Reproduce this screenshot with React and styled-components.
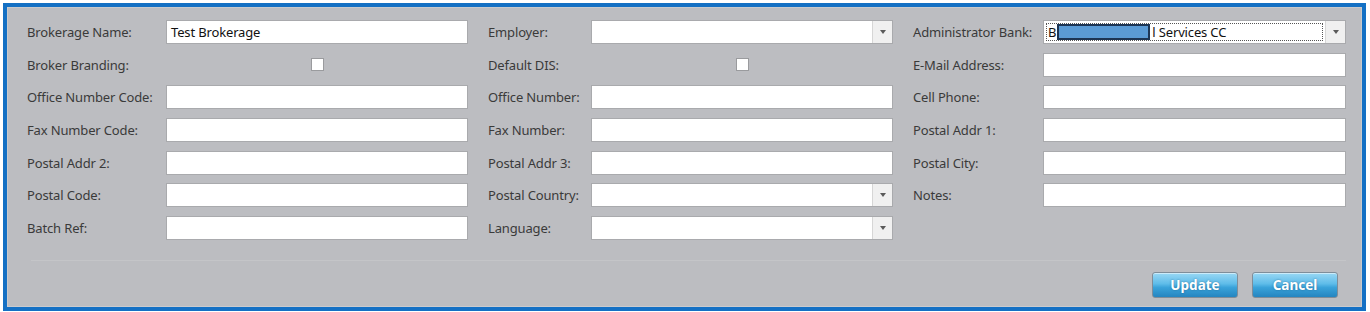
import React from "react";
import styled, { createGlobalStyle } from "styled-components";

const GlobalStyle = createGlobalStyle`
	html, body {
		margin: 0;
		padding: 0;
		background: #ffffff;
	}
	body {
		font-family: "Noto Sans", "Open Sans", sans-serif;
	}
`;

const Frame = styled.div`
	margin: 3px 4px 1px 3px;
	height: 300px;
	border: 4px solid #1470c4;
	background: #bcbdc1;
	box-sizing: content-box;
	display: flex;
	flex-direction: column;
`;

const Inner = styled.div`
	flex: 1;
	border: 1px solid #c9cacd;
	padding: 12px 15px 8px 19px;
	display: flex;
	flex-direction: column;
`;

const Form = styled.div`
	display: flex;
	gap: 20px;
`;

const Section = styled.div`
	width: ${({ $width }) => $width}px;
	flex-shrink: 0;
	display: flex;
	flex-direction: column;
	gap: 8.7px;
`;

const Row = styled.div`
	height: 24px;
	display: flex;
	align-items: center;
`;

const Label = styled.label`
	width: ${({ $width }) => $width}px;
	flex-shrink: 0;
	font-size: 13px;
	color: #3a3a3a;
	white-space: nowrap;
	letter-spacing: -0.15px;
`;

const TextBox = styled.div`
	flex: 1;
	height: 24px;
	box-sizing: border-box;
	background: #ffffff;
	border: 1px solid #a9aaad;
	font-size: 13px;
	color: #111;
	display: flex;
	align-items: center;
	padding-left: 4px;
	letter-spacing: -0.15px;
`;

const CheckCell = styled.div`
	flex: 1;
	display: flex;
	justify-content: center;
`;

const Check = styled.span`
	width: 13px;
	height: 13px;
	box-sizing: border-box;
	background: #ffffff;
	border: 1px solid #9a9b9e;
`;

const Combo = styled.div`
	flex: 1;
	height: 24px;
	box-sizing: border-box;
	background: #ffffff;
	border: 1px solid #a9aaad;
	display: flex;
`;

const ComboText = styled.div`
	flex: 1;
	margin: 2px;
	border: 1px dotted ${({ $focused }) => ($focused ? "#555" : "transparent")};
	font-size: 13px;
	letter-spacing: -0.15px;
	color: #111;
	display: flex;
	align-items: center;
	padding-left: 1px;
	white-space: nowrap;
	overflow: hidden;
`;

const Redact = styled.span`
	display: inline-block;
	width: 93px;
	height: 16px;
	box-sizing: border-box;
	background: #5b9bd5;
	border: 2px solid #1d3554;
	margin: 0 2px 0 1px;
`;

const ComboButton = styled.div`
	width: 19px;
	background: #f0f0f0;
	border-left: 1px solid #d6d6d6;
	display: flex;
	align-items: center;
	justify-content: center;
`;

const Arrow = styled.span`
	width: 0;
	height: 0;
	border-left: 3.5px solid transparent;
	border-right: 3.5px solid transparent;
	border-top: 4px solid #5a5a5a;
`;

const Separator = styled.div`
	margin-top: auto;
	border-top: 1px solid #c4c5c8;
	margin-left: 4px;
`;

const Footer = styled.div`
	display: flex;
	justify-content: flex-end;
	gap: 14px;
	padding: 11px 8px 0 0;
`;

const Button = styled.button`
	width: ${({ $width }) => $width}px;
	height: 26px;
	border: 1px solid #7f8d99;
	border-radius: 3px;
	background: linear-gradient(to bottom, #9ad8f4 0%, #5ebce9 45%, #3aa3da 60%, #2585c0 100%);
	color: #ffffff;
	font-family: "Noto Sans", "Open Sans", sans-serif;
	font-weight: 700;
	font-size: 13.5px;
	text-shadow: 0 0 2px rgba(20, 70, 110, 0.6);
	box-shadow: inset 0 1px 0 rgba(255, 255, 255, 0.5);
	padding: 0;
	cursor: pointer;
`;

const columns = [
	{
		width: 441,
		label: 139,
		rows: [
			{ label: "Brokerage Name:", type: "text", value: "Test Brokerage" },
			{ label: "Broker Branding:", type: "check" },
			{ label: "Office Number Code:", type: "text" },
			{ label: "Fax Number Code:", type: "text" },
			{ label: "Postal Addr 2:", type: "text" },
			{ label: "Postal Code:", type: "text" },
			{ label: "Batch Ref:", type: "text" },
		],
	},
	{
		width: 405,
		label: 103,
		rows: [
			{ label: "Employer:", type: "combo" },
			{ label: "Default DIS:", type: "check" },
			{ label: "Office Number:", type: "text" },
			{ label: "Fax Number:", type: "text" },
			{ label: "Postal Addr 3:", type: "text" },
			{ label: "Postal Country:", type: "combo" },
			{ label: "Language:", type: "combo" },
		],
	},
	{
		width: 433,
		label: 130,
		rows: [
			{ label: "Administrator Bank:", type: "bank" },
			{ label: "E-Mail Address:", type: "text" },
			{ label: "Cell Phone:", type: "text" },
			{ label: "Postal Addr 1:", type: "text" },
			{ label: "Postal City:", type: "text" },
			{ label: "Notes:", type: "text" },
		],
	},
];

const Field = ({ row }) => {
	if (row.type === "check") {
		return (
			<CheckCell>
				<Check />
			</CheckCell>
		);
	}
	if (row.type === "combo" || row.type === "bank") {
		const bank = row.type === "bank";
		return (
			<Combo>
				<ComboText $focused={bank}>
					{bank && (
						<>
							B<Redact />l Services CC
						</>
					)}
				</ComboText>
				<ComboButton>
					<Arrow />
				</ComboButton>
			</Combo>
		);
	}
	return <TextBox>{row.value}</TextBox>;
};

export default function App() {
	return (
		<>
			<GlobalStyle />
			<Frame>
				<Inner>
					<Form>
						{columns.map((col, i) => (
							<Section key={i} $width={col.width}>
								{col.rows.map((row) => (
									<Row key={row.label}>
										<Label $width={col.label}>{row.label}</Label>
										<Field row={row} />
									</Row>
								))}
							</Section>
						))}
					</Form>
					<Separator />
					<Footer>
						<Button $width={86}>Update</Button>
						<Button $width={86}>Cancel</Button>
					</Footer>
				</Inner>
			</Frame>
		</>
	);
}
